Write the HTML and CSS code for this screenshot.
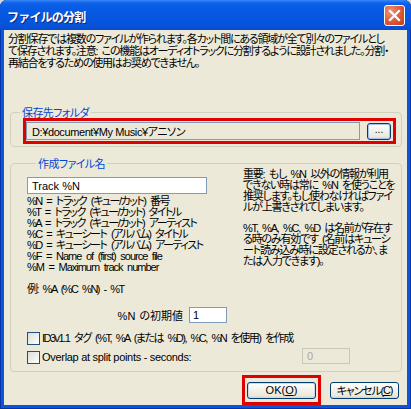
FILE: index.html
```html
<!DOCTYPE html>
<html lang="ja">
<head>
<meta charset="utf-8">
<title>ファイルの分割</title>
<link rel="stylesheet" href="styles.css">
</head>
<body>
<div class="window">
  <div class="titlebar">
    <span class="title">ファイルの分割</span>
    <span class="close">
      <svg width="21" height="21" viewBox="0 0 21 21">
        <path d="M6 6 L15 15 M15 6 L6 15" stroke="#fff" stroke-width="2.2" stroke-linecap="square" fill="none"/>
      </svg>
    </span>
  </div>
  <div class="client">
    <div class="intro jp">
      <div class="ln">分割保存では複数のファイルが作られます。各カット間にある領域が全て別々のファイルとし</div>
      <div class="ln">て保存されます。注意: この機能はオーディオトラックに分割するように設計されました。分割・</div>
      <div class="ln">再結合をするための使用はお奨めできません。</div>
    </div>

    <fieldset class="group g1">
      <legend>保存先フォルダ</legend>
      <div class="hilite folder-row">
        <div class="textbox readonly folder">D:¥document¥My Music¥アニソン</div>
        <div class="btn browse">...</div>
      </div>
    </fieldset>

    <fieldset class="group g2">
      <legend>作成ファイル名</legend>
      <div class="cols">
        <div class="left">
          <div class="textbox name">Track %N</div>
          <div class="list">
            <div class="ln tight">%N = トラック (キュー/カット) 番号</div>
            <div class="ln tight">%T = トラック (キュー/カット) タイトル</div>
            <div class="ln tight">%A = トラック (キュー/カット) アーティスト</div>
            <div class="ln tight">%C = キューシート (アルバム) タイトル</div>
            <div class="ln tight">%D = キューシート (アルバム) アーティスト</div>
            <div class="ln latin">%F = Name of (first) source file</div>
            <div class="ln latin">%M = Maximum track number</div>
          </div>
          <div class="example ln tight">例: %A (%C %N) - %T</div>
        </div>
        <div class="right jp">
          <div class="ln">重要: もし %N 以外の情報が利用</div>
          <div class="ln">できない時は常に %N を使うことを</div>
          <div class="ln">推奨します。もし使わなければファイ</div>
          <div class="ln">ルが上書きされてしまいます。</div>
          <div class="ln p2">%T, %A, %C, %D は名前が存在す</div>
          <div class="ln">る時のみ有効です (名前はキューシ</div>
          <div class="ln">ート読み込み時に設定されるか、ま</div>
          <div class="ln">たは入力できます)。</div>
        </div>
      </div>
      <div class="startrow">
        <span class="startlabel">%N の初期値</span>
        <div class="textbox start">1</div>
      </div>
      <div class="check c1">
        <span class="box"></span>
        <span class="ctext tight">ID3v1.1 タグ (%T, %A (または %D), %C, %N を使用) を作成</span>
      </div>
      <div class="check c2">
        <span class="box"></span>
        <span class="ctext latin2">Overlap at split points - seconds:</span>
        <div class="textbox disabled">0</div>
      </div>
    </fieldset>

    <div class="buttons">
      <div class="hilite okwrap">
        <div class="btn ok">OK(<u>O</u>)</div>
      </div>
      <div class="btn cancel jp">キャンセル(<u>C</u>)</div>
    </div>
  </div>
</div>
</body>
</html>
```
FILE: styles.css
```css
* { box-sizing: border-box; }
html, body { margin: 0; padding: 0; }
body {
  width: 411px;
  height: 409px;
  overflow: hidden;
  background: #d8d8d8;
  font-family: "Liberation Sans", "Noto Sans CJK JP", sans-serif;
  font-size: 11px;
  color: #000;
  font-feature-settings: "palt";
}
.jp { letter-spacing: -1.2px; word-spacing: 2.5px; }
.tight { letter-spacing: -1.5px; word-spacing: 3px; }
.latin { letter-spacing: -1px; word-spacing: 2.5px; }
.latin2 { letter-spacing: -0.3px; }
.ln { height: 11px; line-height: 11px; white-space: nowrap; }
.window {
  width: 411px;
  height: 409px;
  display: flex;
  flex-direction: column;
  border-radius: 7px 7px 0 0;
  overflow: hidden;
  background: #0a55dc;
  box-shadow: inset 1px 0 #0634a6, inset -1px 0 #0634a6, inset 0 -1px #0634a6;
}
.titlebar {
  flex: none;
  height: 30px;
  display: flex;
  align-items: center;
  justify-content: space-between;
  padding: 2px 6px 0 7px;
  background: linear-gradient(to bottom, #3a86f6 0px, #0d62ea 3px, #085be4 8px, #0657e0 18px, #0652d9 26px, #064bcc 30px);
}
.title {
  color: #fff;
  font-family: "Noto Sans CJK JP", sans-serif;
  font-feature-settings: normal;
  font-weight: bold;
  font-size: 12px;
  letter-spacing: -0.8px;
  text-shadow: 1px 1px #0b2a86;
}
.close {
  width: 21px;
  height: 21px;
  margin-top: -2px;
  border: 1px solid #fff;
  border-radius: 3px;
  background: radial-gradient(circle at 30% 30%, #f0937a, #d9542f 60%, #c23b16);
  display: flex;
  align-items: center;
  justify-content: center;
}
.close svg { display: block; margin: -1px; }
.client {
  flex: 1;
  margin: 0 4px 4px;
  background: #ece9d8;
  display: flex;
  flex-direction: column;
}
.intro { margin: 3px 0 0 4px; }
.intro .ln { height: 12px; line-height: 12px; }
.group {
  margin: 37px 0 0 6px;
  width: 392px;
  border: 1px solid #d0d0bf;
  border-radius: 4px;
  padding: 0 0 2px 0;
  min-width: 0;
}
.group legend {
  margin-left: 9px;
  padding: 0 2px;
  color: #0046d5;
  font-family: "Noto Sans CJK JP", sans-serif;
  line-height: 12px;
  height: 12px;
  letter-spacing: -0.6px;
}
.hilite { border: 3px solid #e00000; }
.folder-row {
  margin-left: 12px;
  width: 373px;
  height: 26px;
  display: flex;
  align-items: center;
  justify-content: space-between;
  padding-right: 2px;
}
.textbox {
  border: 1px solid #7f9db9;
  background: #fff;
  display: flex;
  align-items: center;
  white-space: nowrap;
}
.readonly { background: #ece9d8; }
.folder {
  width: 334px;
  height: 18px;
  padding-left: 5px;
  letter-spacing: -0.4px;
}
.btn {
  border: 1px solid #003c74;
  border-radius: 3px;
  background: linear-gradient(to bottom, #ffffff 0%, #f4f3ee 40%, #ece9d8 85%, #d6d0c5 100%);
  display: flex;
  align-items: center;
  justify-content: center;
  white-space: nowrap;
}
.browse {
  width: 24px;
  height: 17px;
  box-shadow: inset 0 0 0 1px #a6c3ef;
  font-size: 10px;
  padding-bottom: 3px;
}
.g2 {
  margin-top: 10px;
  padding: 0 0 7px 16px;
}
.cols { display: flex; }
.left { width: 216px; padding-top: 8px; }
.name {
  width: 180px;
  height: 17px;
  padding-left: 4px;
}
.list { margin-top: 2px; }
.example { margin-top: 11px; }
.right .p2 { margin-top: 10px; }
.startrow {
  display: flex;
  align-items: center;
  margin-top: 12px;
}
.startlabel {
  width: 156px;
  text-align: right;
  white-space: nowrap;
  word-spacing: 1px;
}
.start {
  margin-left: 6px;
  width: 38px;
  height: 16px;
  padding-left: 3px;
}
.check {
  display: flex;
  align-items: flex-start;
}
.c1 { margin-top: 9px; }
.c2 { margin-top: 3px; }
.c2 .box, .c2 .ctext { margin-top: 3px; }
.box {
  width: 13px;
  height: 13px;
  flex: none;
  border: 1px solid #1c5180;
  background: linear-gradient(135deg, #dcdcd7, #ffffff);
}
.ctext { margin-left: 2px; line-height: 13px; height: 13px; white-space: nowrap; }
.disabled {
  margin-left: auto;
  margin-right: 51px;
  width: 48px;
  height: 16px;
  border-color: #c9c7ba;
  background: #ece9d8;
  color: #aca899;
  padding-left: 4px;
}
.buttons {
  margin-top: 3px;
  display: flex;
  justify-content: flex-end;
  align-items: center;
  padding-right: 8px;
}
.okwrap {
  width: 79px;
  height: 30px;
  display: flex;
  align-items: center;
  justify-content: center;
}
.ok, .cancel {
  width: 69px;
  height: 17px;
}
.ok { box-shadow: inset 0 0 0 1px #ccd9ee; }
.cancel { margin-left: 9px; }
u { text-decoration: underline; }
```
